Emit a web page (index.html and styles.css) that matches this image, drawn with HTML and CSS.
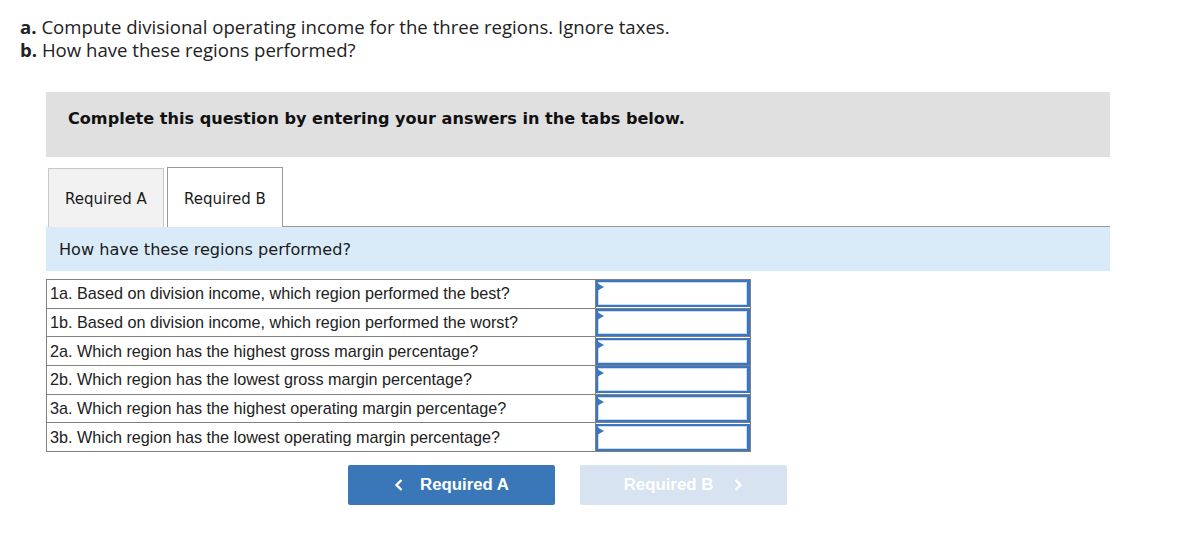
FILE: index.html
```html
<!DOCTYPE html>
<html>
<head>
<meta charset="utf-8">
<link rel="stylesheet" href="styles.css">
</head>
<body>
<div class="intro">
  <p><b>a.</b> Compute divisional operating income for the three regions. Ignore taxes.</p>
  <p><b>b.</b> How have these regions performed?</p>
</div>
<div class="main">
  <div class="banner">Complete this question by entering your answers in the tabs below.</div>
  <div class="tabs">
    <div class="tab tab-a">Required A</div>
    <div class="tab tab-b">Required B</div>
    <div class="tab-fill"></div>
  </div>
  <div class="prompt">How have these regions performed?</div>
  <table class="answers">
    <tr><td class="label">1a. Based on division income, which region performed the best?</td><td class="cell"><div class="inp"><span class="tri"></span></div></td></tr>
    <tr><td class="label">1b. Based on division income, which region performed the worst?</td><td class="cell"><div class="inp"><span class="tri"></span></div></td></tr>
    <tr><td class="label">2a. Which region has the highest gross margin percentage?</td><td class="cell"><div class="inp"><span class="tri"></span></div></td></tr>
    <tr><td class="label">2b. Which region has the lowest gross margin percentage?</td><td class="cell"><div class="inp"><span class="tri"></span></div></td></tr>
    <tr><td class="label">3a. Which region has the highest operating margin percentage?</td><td class="cell"><div class="inp"><span class="tri"></span></div></td></tr>
    <tr><td class="label">3b. Which region has the lowest operating margin percentage?</td><td class="cell"><div class="inp"><span class="tri"></span></div></td></tr>
  </table>
  <div class="nav">
    <button class="btn btn-prev"><svg width="10" height="14" viewBox="0 0 10 14"><path d="M7.5 2 L2.5 7 L7.5 12" fill="none" stroke="#fff" stroke-width="2.4"/></svg><span>Required A</span></button>
    <button class="btn btn-next"><span>Required B</span><svg width="10" height="14" viewBox="0 0 10 14"><path d="M2.5 2 L7.5 7 L2.5 12" fill="none" stroke="#fff" stroke-width="2.4"/></svg></button>
  </div>
</div>
</body>
</html>
```
FILE: styles.css
```css
html, body { margin: 0; padding: 0; background: #fff; }
body { font-family: "Open Sans", "Liberation Sans", sans-serif; color: #1a1a1a; }

.intro { padding: 15px 0 0 20px; font-size: 18.6px; line-height: 23px; color: #222; }
.intro p { margin: 0; white-space: nowrap; }
.intro b { font-weight: 700; }

.main { margin-left: 46px; width: 1064px; }

.banner {
  margin-top: 31px;
  height: 65px;
  background: #e0e0e0;
  box-sizing: border-box;
  padding: 16px 0 0 22px;
  font-family: "DejaVu Sans", Verdana, sans-serif;
  font-weight: 700;
  font-size: 16.1px;
  line-height: 22px;
  color: #111;
}

.tabs { display: flex; align-items: flex-end; margin-top: 10px; height: 60px; }
.tab {
  box-sizing: border-box;
  width: 116px;
  height: 59px;
  display: flex;
  align-items: center;
  justify-content: center;
  font-family: "DejaVu Sans", Verdana, sans-serif;
  font-size: 15px;
  color: #1a1a1a;
  padding-top: 2px;
}
.tab-a { margin-left: 2px; background: #f2f2f2; border: 1px solid #c8c8c8; border-bottom: none; }
.tab-b { margin-left: 3px; background: #fff; border: 1px solid #999; border-bottom: none; height: 60px; }
.tab-fill { flex: 1; border-bottom: 1px solid #999; }

.prompt {
  height: 44px;
  background: #d9ebf9;
  box-sizing: border-box;
  padding: 13px 0 0 13px;
  font-family: "DejaVu Sans", Verdana, sans-serif;
  font-size: 16.1px;
  line-height: 20px;
  color: #1a1a1a;
}

.answers { margin-top: 8px; border-collapse: collapse; font-family: "Liberation Sans", Arial, sans-serif; font-size: 16.2px; color: #222; }
.answers td { border: 1px solid #808080; padding: 0; height: 27.67px; }
.answers .label { width: 545px; padding: 0 0 0 3px; white-space: nowrap; }
.answers .cell { width: 154px; }
.inp {
  position: relative;
  height: 27px;
  box-sizing: border-box;
  border: 2px solid #3b77c0;
  border-right-width: 3px;
  box-shadow: inset 0 0 0 1px #c6dbf1;
  background: #fff;
}
.tri {
  position: absolute;
  left: -1px; top: 1px;
  width: 0; height: 0;
  border-top: 4px solid transparent;
  border-bottom: 4px solid transparent;
  border-left: 7px solid #3b77c0;
}

.nav { display: flex; gap: 25px; margin-top: 13px; padding-left: 302px; }
.btn {
  width: 207px; height: 40px;
  border: none; border-radius: 2px;
  display: flex; align-items: center; justify-content: center;
  font-family: "Liberation Sans", Arial, sans-serif;
  font-weight: 700; font-size: 16.8px;
  color: #fff;
  padding: 0;
  gap: 16px;
}
.btn-prev { background: #3a77b9; }
.btn-next { background: #d7e3f1; gap: 20px; }
```
